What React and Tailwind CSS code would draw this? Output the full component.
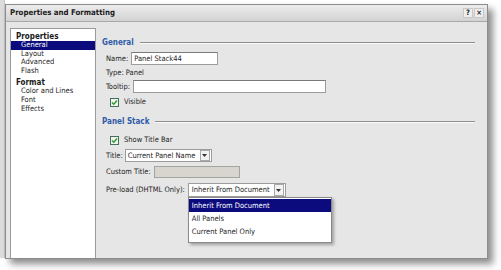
import React from "react";

const Check = () => (
  <span className="w-[9px] h-[9px] border border-[#45705c] bg-[#eef3ec] flex items-center justify-center shrink-0">
    <svg width="7" height="7" viewBox="0 0 7 7">
      <path d="M1 3.4 L2.8 5.2 L6 1.5" stroke="#2e9a2e" strokeWidth="1.4" fill="none" />
    </svg>
  </span>
);

const Arrow = () => (
  <svg width="5" height="3" viewBox="0 0 5 3">
    <path d="M0 0h5L2.5 3z" fill="#333" />
  </svg>
);

const Header = ({ children }) => (
  <div className="flex items-center h-[12px] pl-[6px] pr-[12px]">
    <span className="text-[#2f5ca8] font-bold text-[8px] leading-none">{children}</span>
    <div className="flex-1 ml-[6px] h-[2px] border-t border-[#8d8d8d] border-b border-b-[#fafafa]" />
  </div>
);

export default function App() {
  return (
    <div className="w-[501px] h-[270px] bg-white flex items-start overflow-hidden font-['DejaVu_Sans_Condensed','DejaVu_Sans',sans-serif] text-[7.5px] text-[#1e1e1e]">
      <div className="w-[5px] h-[258px] bg-[#dcdcdc] border-r border-[#c4c4c4]" />
      <div className="mt-[4px] w-[483px] h-[255px] border border-[#8c8c8c] bg-[#e6e6e6] shadow-[5px_5px_7px_rgba(0,0,0,0.45)] flex flex-col">
        {/* title bar */}
        <div className="h-[17px] shrink-0 bg-gradient-to-b from-[#ececec] to-[#d3d3d3] border-b border-[#a9a9a9] flex items-center pl-[4px] pr-[3px]">
          <span className="font-bold text-[7.8px] text-[#1a1a1a] leading-none">Properties and Formatting</span>
          <div className="ml-auto flex gap-[1px]">
            <span className="w-[10px] h-[10px] bg-[#eeeeee] border border-[#c8c8c8] flex items-center justify-center font-bold text-[7.5px] leading-none text-[#222]">?</span>
            <span className="w-[10px] h-[10px] bg-[#eeeeee] border border-[#c8c8c8] flex items-center justify-center font-bold text-[7.5px] leading-none text-[#222]">×</span>
          </div>
        </div>
        {/* body */}
        <div className="flex-1 flex">
          <div className="ml-[4px] mt-[6px] w-[86px] bg-white border-l border-t border-r border-[#9a9a9a] pt-[3.7px]">
            <div className="leading-[8.6px] h-[8.6px] pl-[5px] font-bold text-[8px] text-[#1a1a1a]">Properties</div>
            <div className="leading-[8.6px] h-[8.6px] pl-[10px] bg-[#0b0b7e] text-white">General</div>
            <div className="leading-[8.6px] h-[8.6px] pl-[10px]">Layout</div>
            <div className="leading-[8.6px] h-[8.6px] pl-[10px]">Advanced</div>
            <div className="leading-[8.6px] h-[8.6px] pl-[10px]">Flash</div>
            <div className="leading-[8.6px] h-[8.6px] pl-[5px] mt-[3.2px] font-bold text-[8px] text-[#1a1a1a]">Format</div>
            <div className="leading-[8.6px] h-[8.6px] pl-[10px]">Color and Lines</div>
            <div className="leading-[8.6px] h-[8.6px] pl-[10px]">Font</div>
            <div className="leading-[8.6px] h-[8.6px] pl-[10px]">Effects</div>
          </div>
          <div className="flex-1 flex flex-col pt-[15px]">
            <Header>General</Header>
            <div className="mt-[3px] h-[13px] flex items-center pl-[10px]">
              <span>Name:</span>
              <div className="ml-[3px] w-[87px] h-[13px] bg-white border border-[#9c9c9c] border-t-[#7a7a7a] flex items-center pl-[2px]">Panel Stack44</div>
            </div>
            <div className="mt-[2px] h-[12px] flex items-center pl-[10px]">Type: Panel</div>
            <div className="mt-[1px] h-[13px] flex items-center pl-[10px]">
              <span>Tooltip:</span>
              <div className="ml-[3px] w-[193px] h-[13px] bg-white border border-[#9c9c9c] border-t-[#7a7a7a]" />
            </div>
            <div className="mt-[3px] h-[12px] flex items-center pl-[14px] gap-[5px]">
              <Check />
              <span>Visible</span>
            </div>
            <div className="mt-[8px]">
              <Header>Panel Stack</Header>
            </div>
            <div className="mt-[6px] h-[12px] flex items-center pl-[14px] gap-[5px]">
              <Check />
              <span>Show Title Bar</span>
            </div>
            <div className="mt-[3px] h-[13px] flex items-center pl-[10px]">
              <span>Title:</span>
              <div className="ml-[2px] w-[87px] h-[13px] bg-white border border-[#9c9c9c] flex items-center">
                <span className="pl-[2px] flex-1">Current Panel Name</span>
                <span className="w-[10px] h-[11px] mr-[1px] border border-[#a8a8a8] bg-[#f2f2f2] flex items-center justify-center">
                  <Arrow />
                </span>
              </div>
            </div>
            <div className="mt-[4px] h-[12px] flex items-center pl-[10px]">
              <span>Custom Title:</span>
              <div className="ml-[3px] w-[86px] h-[12px] bg-[#d8d5cf] border border-[#a4a4a4]" />
            </div>
            <div className="mt-[5px] h-[14px] flex items-center pl-[10px]">
              <span>Pre-load (DHTML Only):</span>
              <div className="relative ml-[3px] w-[98px] h-[14px] bg-white border border-[#9c9c9c] flex items-center">
                <span className="pl-[3px] flex-1 whitespace-nowrap">Inherit From Document</span>
                <span className="w-[10px] h-[12px] mr-[1px] border border-[#a8a8a8] bg-[#f2f2f2] flex items-center justify-center">
                  <Arrow />
                </span>
                <div className="absolute left-[-1px] top-[13px] w-[144px] h-[46px] bg-white border border-[#8a8a8a] shadow-[2px_2px_3px_rgba(0,0,0,0.3)] pt-[1px] z-10">
                  <div className="h-[13px] leading-[13px] pl-[3px] bg-[#0b0b7e] text-white">Inherit From Document</div>
                  <div className="h-[13px] leading-[13px] pl-[3px]">All Panels</div>
                  <div className="h-[13px] leading-[13px] pl-[3px]">Current Panel Only</div>
                </div>
              </div>
            </div>
          </div>
        </div>
      </div>
    </div>
  );
}
